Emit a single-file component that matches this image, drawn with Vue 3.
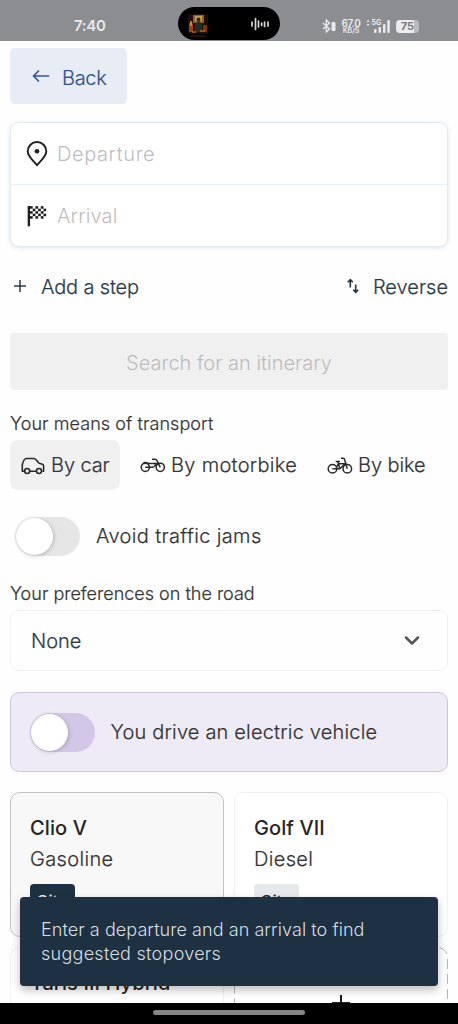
<script setup>
import { ref } from 'vue'

const avoidJams = ref(false)
const electric = ref(false)
const activeMode = ref('car')
const modes = [
  { id: 'car', label: 'By car' },
  { id: 'motorbike', label: 'By motorbike' },
  { id: 'bike', label: 'By bike' },
]
const vehicles = [
  { id: 'clio', name: 'Clio V', fuel: 'Gasoline', badge: 'City', selected: true },
  { id: 'golf', name: 'Golf VII', fuel: 'Diesel', badge: 'City', selected: false },
  { id: 'yaris', name: 'Yaris III Hybrid', fuel: 'Gasoline', badge: 'City', selected: false },
]
const checks = []
for (let r = 0; r < 5; r++) {
  for (let c = 0; c < 6; c++) {
    if ((r + c) % 2 === 0) checks.push({ x: 4 + c * 2.7, y: 1.2 + r * 2.5 })
  }
}
</script>

<template>
  <div class="screen">
    <header class="status">
      <span class="clock">7:40</span>
      <div class="island">
        <svg class="cover" width="20" height="24" viewBox="0 0 20 24">
          <rect y="1" width="20" height="20" fill="#1d0f08" />
          <rect x="5" y="2" width="11" height="8" fill="#8a6428" />
          <rect x="7" y="3" width="7" height="5" fill="#c4a055" />
          <rect x="1" y="10" width="4" height="9" rx="1" fill="#9a4210" />
          <rect x="2" y="8" width="2" height="5" rx="1" fill="#d9862a" />
          <rect x="15" y="12" width="4" height="7" rx="1" fill="#7e360d" />
          <circle cx="10.500" cy="6.500" r="2" fill="#242a20" />
          <path d="M7 19v-8l3.500-3 3.500 3v8z" fill="#262e23" />
          <path d="M4 19h4M12 18h5" stroke="#b9621b" stroke-width="1.500" />
          <path d="M3 23h14" stroke="#55240e" stroke-width="1" />
        </svg>
        <svg class="wave" width="20" height="14" viewBox="0 0 20 14" fill="none" stroke="#d6d6d8" stroke-width="1.700" stroke-linecap="round">
          <path d="M2 5v4M5.500 1.500v11M8.500 4v6M11.700 6v2.500M14.600 5v4.500M18 5v4" />
        </svg>
      </div>
      <div class="indicators">
        <svg width="14" height="14" viewBox="0 0 14 14" fill="none" stroke="#e9e9eb" stroke-width="1.300">
          <path d="M1 4l6.500 6L4.300 13V1L7.500 4 1 10" />
          <rect x="9.500" y="3" width="4" height="9" rx="1" fill="#e9e9eb" stroke="none" />
        </svg>
        <div class="rate"><b>67.0</b><span>KB/S</span></div>
        <svg class="signal" width="24" height="15" viewBox="0 0 24 15" fill="#e9e9eb">
          <path d="M.5 3l1.500-2 1.500 2zM.5 5l1.500 2 1.500-2z" />
          <rect x="8" y="10" width="2.500" height="4" rx="1" />
          <rect x="12.500" y="8" width="2.500" height="6" rx="1" />
          <rect x="17" y="5" width="2.500" height="9" rx="1" />
          <rect x="21.300" y="1" width="2.500" height="13" rx="1" />
          <text x="5.500" y="6.200" font-size="7" font-weight="700" font-family="Inter, sans-serif">5G</text>
        </svg>
        <div class="battery">75</div>
      </div>
    </header>

    <main class="content">
      <button class="back">
        <svg width="18" height="14" viewBox="0 0 18 14" fill="none" stroke="#2f5597" stroke-width="1.700" stroke-linecap="round" stroke-linejoin="round">
          <path d="M16.500 7H1.500M6.500 2l-5 5 5 5" />
        </svg>
        <span class="t-back">Back</span>
      </button>

      <section class="places">
        <div class="place">
          <svg width="22" height="26" viewBox="0 0 22 26" fill="none" stroke="#1d1d1f" stroke-width="1.900" stroke-linejoin="round">
            <path d="M11 24.200C8.500 20.500 1.700 16 1.700 10.300a9.300 9.300 0 0 1 18.600 0C20.300 16 13.500 20.500 11 24.200z" />
            <circle cx="11" cy="10.300" r="2.300" fill="#1d1d1f" stroke="none" />
          </svg>
          <span class="t-dep">Departure</span>
        </div>
        <div class="place">
          <svg width="22" height="22" viewBox="0 0 22 22" fill="#1d1d1f">
            <rect x="1.700" y="1" width="2.300" height="20.300" />
            <rect v-for="(k, i) in checks" :key="i" :x="k.x" :y="k.y" width="2.700" height="2.500" />
          </svg>
          <span class="t-arr">Arrival</span>
        </div>
      </section>

      <div class="actions">
        <button class="link">
          <svg width="14" height="14" viewBox="0 0 14 14" stroke="#2b3a48" stroke-width="1.500"><path d="M7 1v12M1 7h12" /></svg>
          <span class="t-add">Add a step</span>
        </button>
        <button class="link rev">
          <svg width="12" height="16" viewBox="0 0 12 16" fill="none" stroke="#26323d" stroke-width="1.600">
            <path d="M3.300 9.500V2M.8 4.200l2.500-2.500 2.500 2.500M8.700 6.500V14M6.200 11.800l2.500 2.500 2.500-2.500" />
          </svg>
          <span class="t-rev">Reverse</span>
        </button>
      </div>

      <button class="search" disabled><span class="t-search">Search for an itinerary</span></button>

      <h2 class="label"><span class="t-means">Your means of transport</span></h2>
      <div class="modes">
        <button v-for="m in modes" :key="m.id" class="mode" :class="[m.id, { active: activeMode === m.id }]" @click="activeMode = m.id">
          <svg v-if="m.id === 'car'" width="24" height="18" viewBox="0 0 24 18" fill="none" stroke="#29292b" stroke-width="1.600" stroke-linejoin="round">
            <path d="M3.500 14.200H1.300V7.500C2.200 4 3.200 1.500 5.500 1.500h7.300c2.200 0 3.600 3.600 5.400 4.700l3.200 1c.9.400 1.200 1 1.200 1.800v5.200h-1.200M8.800 14.200h6.600" />
            <circle cx="6.200" cy="14" r="2.500" /><circle cx="18" cy="14" r="2.500" />
          </svg>
          <svg v-else-if="m.id === 'motorbike'" width="26" height="18" viewBox="0 0 26 18" fill="none" stroke="#29292b" stroke-width="1.500" stroke-linejoin="round">
            <circle cx="5.300" cy="10.300" r="4.100" /><circle cx="20.300" cy="10.300" r="4.100" />
            <path d="M3.500 5.800c3-.8 5 .8 7.500.8h7.300M12 2.200h3c1 0 1.500.5 2 1.500l3.300 6.600M5.300 10.300h7.200c2 0 3-3.300 5.500-4" />
          </svg>
          <svg v-else width="26" height="18" viewBox="0 0 26 18" fill="none" stroke="#29292b" stroke-width="1.500" stroke-linejoin="round">
            <circle cx="5.500" cy="11.800" r="4.300" /><circle cx="20.300" cy="11.800" r="4.300" />
            <path d="M14 1.200h2.200c1 0 1.300.6 1.500 1.500l2.600 9.100M8.700 4.500h4.300M10.800 4.500l2 7.300H5.500M18.300 6.800h-7l-1.800 3.300M12.800 11.800l5.500-5" />
          </svg>
          <span :class="'t-' + m.id">{{ m.label }}</span>
        </button>
      </div>

      <label class="switch-row">
        <button class="toggle" role="switch" :aria-checked="avoidJams" @click="avoidJams = !avoidJams"><i /></button>
        <span class="t-jams">Avoid traffic jams</span>
      </label>

      <h2 class="label second"><span class="t-pref">Your preferences on the road</span></h2>
      <div class="select">
        <span class="t-none">None</span>
        <svg width="16" height="11" viewBox="0 0 16 11" fill="none" stroke="#555557" stroke-width="2.500" stroke-linecap="round" stroke-linejoin="round"><path d="M2 2.500l6 6L14 2.500" /></svg>
      </div>

      <label class="electric">
        <button class="toggle violet" role="switch" :aria-checked="electric" @click="electric = !electric"><i /></button>
        <span class="t-ev">You drive an electric vehicle</span>
      </label>

      <section class="vehicles">
        <article v-for="v in vehicles" :key="v.id" class="vehicle" :class="{ selected: v.selected }">
          <strong>{{ v.name }}</strong>
          <span class="fuel">{{ v.fuel }}</span>
          <em>{{ v.badge }}</em>
        </article>
        <button class="vehicle add">
          <svg class="outline" width="214" height="145" fill="none" stroke="#b4b4b6"><rect x=".5" y=".5" width="213" height="144" rx="10" stroke-dasharray="10 5" /></svg>
          <svg width="18" height="18" viewBox="0 0 18 18" stroke="#1d1d1f" stroke-width="2"><path d="M9 0v18M0 8h18" /></svg>
        </button>
      </section>
    </main>

    <div class="toast" role="status">
      <span class="t-toast1">Enter a departure and an arrival to find</span>
      <span class="t-toast2">suggested stopovers</span>
    </div>
    <footer class="nav"><i /></footer>
  </div>
</template>

<style>
body { margin: 0; background: #fff; }
</style>

<style scoped>
.screen { position: relative; width: 458px; height: 1024px; overflow: hidden; background: #fefefe; color: #333335; font: 400 20px/28px Inter, "Noto Sans", sans-serif; }
.screen * { box-sizing: border-box; }
button { border: 0; padding: 0; background: none; font: inherit; color: inherit; text-align: left; }
span, strong { white-space: nowrap; }
svg { display: block; flex: none; }
.status { height: 41px; background: #8c8d91; display: grid; grid-template-columns: 178px 102px 1fr; color: #e9e9eb; }
.clock { font-size: 15px; font-weight: 600; line-height: 20px; padding: 16px 0 0 74px; letter-spacing: -.3px; }
.island { height: 33px; margin-top: 7px; border-radius: 17px; background: #000; display: flex; align-items: center; justify-content: space-between; padding: 0 10px; }
.cover { margin-top: 2px; }
.indicators { display: flex; align-items: center; height: 20px; margin: 16px 0 0 42px; }
.rate { width: 20px; margin-left: 5px; display: flex; flex-direction: column; align-items: center; }
.rate b { font-weight: 600; font-size: 10px; line-height: 8px; letter-spacing: -.3px; }
.rate span { font-size: 7px; line-height: 7px; font-weight: 600; }
.signal { margin: 0 0 0 5px; }
.battery { margin-left: 6px; width: 23px; height: 13px; border-radius: 4px; font-size: 11px; line-height: 13px; font-weight: 700; color: #77787c; text-align: center; background: linear-gradient(90deg, #ececee 78%, #b9babd 78%); }
.content { display: flex; flex-direction: column; padding: 7px 10px 0; }
.back { width: 117px; height: 56px; border-radius: 5px; background: #e8edf5; display: flex; align-items: center; gap: 12px; padding: 3px 0 0 22px; color: #33538d; font-weight: 300; }
.back svg { margin-top: -3px; }
.places { margin-top: 18px; height: 125px; border: 1px solid #e3ebf1; border-radius: 9px; background: #fff; box-shadow: 0 1px 4px #cfdbe6b0; }
.place { height: 61px; display: flex; align-items: center; gap: 9px; padding: 1px 0 0 15px; color: #bdbdbf; font-weight: 300; }
.place + .place { height: 63px; border-top: 1px solid #e9eef2; padding-top: 0; }
.actions { margin-top: 26px; height: 28px; display: flex; justify-content: space-between; }
.link { display: flex; align-items: center; color: #2b3a48; font-weight: 300; gap: 14px; padding-left: 3px; }
.link svg { margin-top: -3px; }
.search { margin-top: 32px; height: 57px; border-radius: 4px; background: #f0f0f0; color: #bcbcbe; text-align: center; padding-top: 3px; font-weight: 300; }
.label { margin: 21px 0 0; height: 24px; font-size: 18px; font-weight: 300; line-height: 25px; }
.modes { display: flex; margin-top: 5px; height: 50px; }
.mode { display: flex; align-items: center; gap: 6px; padding: 0 11px; border-radius: 8px; font-weight: 300; }
.mode.car { width: 110px; }
.mode.motorbike { width: 197px; padding-left: 20px; gap: 5px; }
.mode.bike { padding-left: 10px; gap: 5px; }
.mode svg { margin-top: 1px; }
.active { background: #f0f0f0; }
.switch-row { margin: 26px 0 0 5px; height: 40px; display: flex; align-items: center; gap: 16px; font-weight: 300; }
.toggle { width: 65px; height: 39px; flex: none; border-radius: 20px; background: #e6e6e6; padding: 1px; }
.toggle i { display: block; width: 37px; height: 37px; border-radius: 50%; background: #fff; box-shadow: 1px 1px 4px #0003; }
.violet { background: #d3c7e7; }
.label.second { margin-top: 25px; }
.select { margin-top: 5px; height: 61px; border: 1px solid #f0f0f2; border-radius: 9px; padding: 0 27px 0 20px; display: flex; align-items: center; justify-content: space-between; color: #2b3a48; font-weight: 300; }
.electric { margin-top: 21px; height: 80px; border: 1px solid #d0c5dd; border-radius: 9px; background: #efebf6; display: flex; align-items: center; gap: 15.500px; padding-left: 19px; font-weight: 300; }
.vehicles { margin-top: 20px; display: grid; grid-template-columns: 1fr 1fr; gap: 10px; }
.vehicle { height: 145px; border: 1px solid #f0f0f1; border-radius: 10px; padding: 20px 0 0 19px; display: flex; flex-direction: column; align-items: flex-start; background: #fff; }
.vehicle.selected { border-color: #c2c2c4; background: #f8f8f8; }
.vehicle strong { font-weight: 500; line-height: 30px; color: #252527; letter-spacing: .1px; }
.fuel { line-height: 32px; font-weight: 300; letter-spacing: .35px; }
.vehicle em { margin-top: 9px; padding: 2px 6px; width: 45px; height: 28px; border-radius: 4px; background: #e5e9ec; font-style: normal; font-size: 17px; line-height: 33px; color: #252527; }
.vehicle.selected em { background: #1e3142; color: #e4eaef; }
.vehicle.add { position: relative; border: 0; padding: 48px 0 0; align-items: center; }
.outline { position: absolute; inset: 0; }
.toast { position: absolute; left: 20px; top: 897px; width: 418px; height: 89px; border-radius: 4px; background: #1e3142; color: #d8dee4; box-shadow: 0 4px 9px #0004; padding: 21px 0 0 21px; display: flex; flex-direction: column; font-size: 18px; line-height: 24px; font-weight: 300; }
.nav { position: absolute; left: 0; right: 0; bottom: 0; height: 21px; background: #000; display: flex; justify-content: center; padding-top: 7px; }
.nav i { width: 152px; height: 5px; border-radius: 3px; background: #858585; }
.back, .link, .label, .mode, .switch-row, .select, .electric, .fuel { -webkit-text-stroke: .2px currentColor; }
.t-back { letter-spacing: -.3px; }
.t-dep { letter-spacing: .6px; }
.t-arr { letter-spacing: .15px; }
.t-add { letter-spacing: -.15px; }
.t-means { letter-spacing: .07px; }
.t-motorbike { letter-spacing: .3px; }
.t-car, .t-bike { letter-spacing: -.1px; }
.t-jams { letter-spacing: .35px; }
.t-ev { letter-spacing: .18px; }
.t-toast1 { letter-spacing: .06px; }
.t-toast2 { letter-spacing: .27px; }
</style>
